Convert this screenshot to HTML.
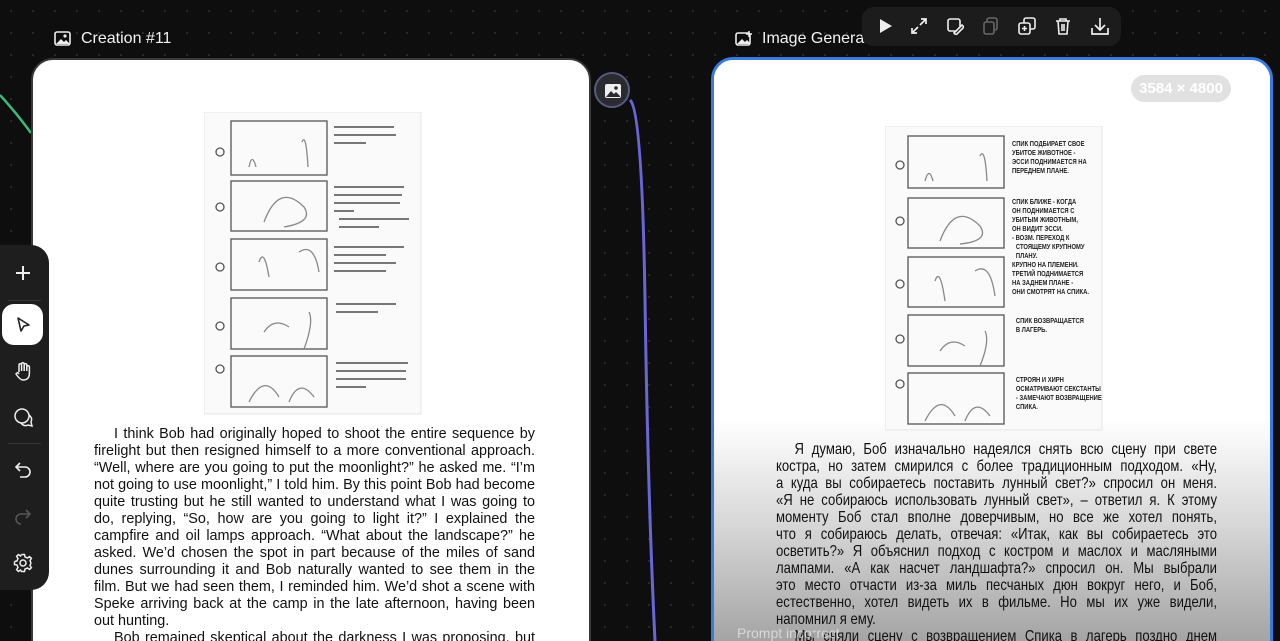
<!DOCTYPE html>
<html><head><meta charset="utf-8"><style>
html,body{margin:0;width:1280px;height:641px;overflow:hidden}
body{font-family:"Liberation Sans",sans-serif;position:relative;
background-image:radial-gradient(circle,#2a2a2a 1px,transparent 1.2px);background-size:22px 22px;background-color:#0e0e0e}
.abs{position:absolute}
.title{color:#f2f2f2;font-size:16px;}
.card{position:absolute;background:#fff;border-radius:22px;overflow:hidden}
.txt{position:absolute;font-family:"Liberation Sans","DejaVu Sans",sans-serif;font-size:14.4px;line-height:17px;color:#111;white-space:nowrap}
.txt div{text-align:justify;text-align-last:justify}
.txt div.l{text-align-last:left}
.ru{transform-origin:0 0;transform:scaleX(0.84);font-size:15.6px}
.sb{position:absolute;left:0;top:245px;width:49px;height:345px;background:#1e1e1e;border-radius:0 18px 18px 0}
.sb svg{position:absolute;left:13px}
.tb{position:absolute;left:862px;top:7px;width:259px;height:39px;background:#1c1c1c;border-radius:12px}
.tb svg{position:absolute;top:10px}
</style></head><body>
<svg class="abs" style="left:0;top:0" width="1280" height="641">
<path d="M0 95 Q18 115 31 133" stroke="#3cb878" stroke-width="2.5" fill="none"/>
<path d="M630 100 Q642 110 645 300 Q648 500 655 641" stroke="#6a66d8" stroke-width="3" fill="none"/>
</svg>
<svg class="abs" style="left:54px;top:31px" width="18" height="16"><rect x="1" y="1" width="15" height="13" rx="2" fill="none" stroke="#eee" stroke-width="1.6"/><path d="M2 13 L7 8 L10 11 L12 9 L15 12 V13Z" fill="#eee"/><circle cx="11" cy="5" r="1.6" fill="#eee"/></svg>
<div class="abs title" style="left:81px;top:30px">Creation #11</div>
<svg class="abs" style="left:735px;top:31px" width="18" height="16"><rect x="1" y="2" width="14" height="12" rx="2" fill="none" stroke="#eee" stroke-width="1.6"/><path d="M2 13 L7 8 L10 11 L12 9 L15 12 V13Z" fill="#eee"/><path d="M14 0V6M11 3H17" stroke="#eee" stroke-width="1.5"/></svg>
<div class="abs title" style="left:762px;top:30px">Image Genera</div>

<div class="card" style="left:31px;top:58px;width:556px;height:600px;border:2px solid #3a3a3a">
<svg class="abs" style="left:171px;top:52px" width="218" height="303">
<rect x="0" y="0" width="217" height="302" fill="#fafafa" stroke="#e4e4e4"/>
<g fill="none" stroke="#555" stroke-width="1.3">
<rect x="27" y="9" width="96" height="54"/><rect x="27" y="69" width="96" height="50"/><rect x="27" y="127" width="96" height="51"/><rect x="27" y="186" width="96" height="51"/><rect x="27" y="244" width="96" height="51"/>
<circle cx="16" cy="40" r="4"/><circle cx="16" cy="95" r="4"/><circle cx="16" cy="155" r="4"/><circle cx="16" cy="214" r="4"/><circle cx="16" cy="257" r="4"/>
<path d="M45 55 Q48 40 52 55 M98 30 Q102 20 104 55 M60 110 Q75 70 100 95 Q110 110 80 115 M55 150 Q60 135 65 165 M95 140 Q110 130 115 160 M60 220 Q70 205 85 215 M105 200 Q110 210 100 237 M45 290 Q60 260 75 285 M85 290 Q95 265 110 285" stroke="#888"/>
</g>
<g fill="#777"><rect x="130" y="14" width="60" height="2"/><rect x="130" y="22" width="62" height="2"/><rect x="130" y="30" width="32" height="2"/>
<rect x="130" y="74" width="70" height="2"/><rect x="130" y="82" width="68" height="2"/><rect x="130" y="90" width="66" height="2"/><rect x="130" y="98" width="20" height="2"/><rect x="135" y="106" width="70" height="2"/><rect x="135" y="114" width="40" height="2"/>
<rect x="130" y="134" width="70" height="2"/><rect x="130" y="142" width="52" height="2"/><rect x="130" y="150" width="62" height="2"/><rect x="130" y="158" width="52" height="2"/>
<rect x="132" y="191" width="60" height="2"/><rect x="132" y="199" width="42" height="2"/>
<rect x="132" y="250" width="72" height="2"/><rect x="132" y="258" width="70" height="2"/><rect x="132" y="266" width="70" height="2"/><rect x="132" y="274" width="30" height="2"/></g>
</svg>
<div class="txt" style="left:61px;top:366px;width:441px">
<div style="padding-left:20px">I think Bob had originally hoped to shoot the entire sequence by</div>
<div>firelight but then resigned himself to a more conventional approach.</div>
<div>“Well, where are you going to put the moonlight?” he asked me. “I’m</div>
<div>not going to use moonlight,” I told him. By this point Bob had become</div>
<div>quite trusting but he still wanted to understand what I was going to</div>
<div>do, replying, “So, how are you going to light it?” I explained the</div>
<div>campfire and oil lamps approach. “What about the landscape?” he</div>
<div>asked. We’d chosen the spot in part because of the miles of sand</div>
<div>dunes surrounding it and Bob naturally wanted to see them in the</div>
<div>film. But we had seen them, I reminded him. We’d shot a scene with</div>
<div>Speke arriving back at the camp in the late afternoon, having been</div>
<div class="l">out hunting.</div>
<div style="padding-left:20px">Bob remained skeptical about the darkness I was proposing, but</div>
</div>
</div>
<div class="abs" style="left:594px;top:72px;width:36px;height:36px;border-radius:50%;background:#2a2a30;border:2px solid #555a80;box-sizing:border-box"></div>
<svg class="abs" style="left:604px;top:83px" width="18" height="16"><rect x="1" y="1" width="16" height="14" rx="2" fill="#eee"/><path d="M2 14 L7 8 L10 11 L12 9 L16 13 V14Z" fill="#2a2a30"/><circle cx="12" cy="5" r="1.8" fill="#2a2a30"/></svg>

<div class="card" style="left:711px;top:57px;width:556px;height:600px;border:3px solid #3a7ae0">
<div class="abs" style="left:0;top:0;right:0;bottom:0;background:linear-gradient(#fff 0,#fff 360px,#d5d5d5 470px,#a0a0a0 590px)"></div>
<div class="abs" style="left:417px;top:15px;width:100px;height:27px;border-radius:14px;background:#e1e1e1;color:#fff;font-size:15px;font-weight:bold;text-align:center;line-height:27px">3584 × 4800</div>
<svg class="abs" style="left:171px;top:66px" width="218" height="305">
<rect x="0" y="0" width="217" height="304" fill="#fafafa" stroke="#e4e4e4"/>
<g fill="none" stroke="#555" stroke-width="1.3">
<rect x="23" y="10" width="96" height="52"/><rect x="23" y="72" width="96" height="50"/><rect x="23" y="131" width="96" height="50"/><rect x="23" y="189" width="96" height="51"/><rect x="23" y="247" width="96" height="51"/>
<circle cx="15" cy="39" r="4"/><circle cx="15" cy="95" r="4"/><circle cx="15" cy="158" r="4"/><circle cx="15" cy="213" r="4"/><circle cx="15" cy="258" r="4"/>
<path d="M40 55 Q44 40 48 55 M95 30 Q100 20 102 55 M55 115 Q70 75 95 100 Q105 115 75 118 M50 155 Q55 140 60 175 M90 145 Q105 135 110 170 M55 225 Q65 210 80 220 M100 205 Q105 215 95 240 M40 295 Q55 265 70 290 M80 295 Q90 270 105 290" stroke="#888"/>
</g>
<g font-family="Liberation Sans,DejaVu Sans,sans-serif" font-size="7.5" font-weight="bold" fill="#222" transform="translate(127 0) scale(0.78 1)">
<text x="0" y="20">СПИК ПОДБИРАЕТ СВОЕ</text><text x="0" y="29">УБИТОЕ ЖИВОТНОЕ -</text><text x="0" y="38">ЭССИ ПОДНИМАЕТСЯ НА</text><text x="0" y="47">ПЕРЕДНЕМ ПЛАНЕ.</text>
<text x="0" y="78">СПИК БЛИЖЕ - КОГДА</text><text x="0" y="87">ОН ПОДНИМАЕТСЯ С</text><text x="0" y="96">УБИТЫМ ЖИВОТНЫМ,</text><text x="0" y="105">ОН ВИДИТ ЭССИ.</text><text x="0" y="114">- ВОЗМ. ПЕРЕХОД К</text><text x="5" y="123">СТОЯЩЕМУ КРУПНОМУ</text><text x="5" y="132">ПЛАНУ.</text>
<text x="0" y="141">КРУПНО НА ПЛЕМЕНИ.</text><text x="0" y="150">ТРЕТИЙ ПОДНИМАЕТСЯ</text><text x="0" y="159">НА ЗАДНЕМ ПЛАНЕ -</text><text x="0" y="168">ОНИ СМОТРЯТ НА СПИКА.</text>
<text x="5" y="197">СПИК ВОЗВРАЩАЕТСЯ</text><text x="5" y="206">В ЛАГЕРЬ.</text>
<text x="5" y="256">СТРОЯН И ХИРН</text><text x="5" y="265">ОСМАТРИВАЮТ СЕКСТАНТЫ</text><text x="5" y="274">- ЗАМЕЧАЮТ ВОЗВРАЩЕНИЕ</text><text x="5" y="283">СПИКА.</text></g>
</svg>
<div class="txt ru" style="left:62px;top:381px;width:525px">
<div style="padding-left:22px">Я думаю, Боб изначально надеялся снять всю сцену при свете</div>
<div>костра, но затем смирился с более традиционным подходом. «Ну,</div>
<div>а куда вы собираетесь поставить лунный свет?» спросил он меня.</div>
<div>«Я не собираюсь использовать лунный свет», – ответил я. К этому</div>
<div>моменту Боб стал вполне доверчивым, но все же хотел понять,</div>
<div>что я собираюсь делать, отвечая: «Итак, как вы собираетесь это</div>
<div>осветить?» Я объяснил подход с костром и маслох и масляными</div>
<div>лампами. «А как насчет ландшафта?» спросил он. Мы выбрали</div>
<div>это место отчасти из-за миль песчаных дюн вокруг него, и Боб,</div>
<div>естественно, хотел видеть их в фильме. Но мы их уже видели,</div>
<div class="l">напомнил я ему.</div>
<div style="padding-left:22px">Мы сняли сцену с возвращением Спика в лагерь поздно днем</div>
</div>
<div class="abs" style="left:23px;top:565px;color:rgba(255,255,255,.55);font-size:14px">Prompt incorrect</div>
</div>

<div class="tb">
<svg style="left:14px" width="18" height="18"><path d="M4 2 L16 9 L4 16Z" fill="#eee"/></svg>
<svg style="left:48px" width="18" height="18" fill="none" stroke="#eee" stroke-width="1.7"><path d="M11 2H16V7M16 2L10 8M7 16H2V11M2 16L8 10"/></svg>
<svg style="left:84px" width="18" height="18" fill="none" stroke="#eee" stroke-width="1.6"><rect x="2" y="2" width="12" height="12" rx="2"/><path d="M8 16L16 8L18 10L10 18Z" fill="#1c1c1c"/></svg>
<svg style="left:120px" width="18" height="18" fill="none" stroke="#666" stroke-width="1.6"><rect x="5" y="1" width="10" height="12" rx="2"/><rect x="2" y="5" width="10" height="12" rx="2" fill="#1c1c1c"/></svg>
<svg style="left:156px" width="18" height="18" fill="none" stroke="#eee" stroke-width="1.6"><rect x="6" y="1" width="11" height="11" rx="2"/><rect x="1" y="6" width="11" height="11" rx="2" fill="#1c1c1c"/><path d="M6.5 9V14M4 11.5H9"/></svg>
<svg style="left:192px" width="18" height="18" fill="none" stroke="#eee" stroke-width="1.6"><path d="M2 4H16M6 4V2H12V4M4 4L5 17H13L14 4M8 7V14M10 7V14"/></svg>
<svg style="left:228px" width="20" height="18" fill="none" stroke="#eee" stroke-width="1.7"><path d="M10 1V12M5 8L10 13L15 8M2 11V17H18V11"/></svg>
</div>

<div class="sb">
<svg style="top:18px" width="20" height="20" stroke="#eee" stroke-width="2"><path d="M10 3V17M3 10H17"/></svg>
<div class="abs" style="left:8px;top:55px;width:33px;height:1px;background:#333"></div>
<div class="abs" style="left:2px;top:59px;width:41px;height:41px;background:#fff;border-radius:12px"></div>
<svg style="top:70px" width="20" height="20" fill="none" stroke="#222" stroke-width="1.6"><path d="M5 3L16 10L11 11L8 16Z" stroke-linejoin="round"/></svg>
<svg style="top:116px" width="20" height="22" fill="none" stroke="#eee" stroke-width="1.5"><path d="M6 11V4a1.3 1.3 0 0 1 2.6 0V10M8.6 3a1.3 1.3 0 0 1 2.6 0V10M11.2 4a1.3 1.3 0 0 1 2.6 0V10M13.8 6a1.3 1.3 0 0 1 2.6 0V13Q16 19 10 19Q7 19 3 13L4 12Q5 11 6 13"/></svg>
<svg style="top:162px" width="22" height="22" fill="none" stroke="#eee" stroke-width="1.5"><circle cx="9" cy="9" r="7"/><path d="M16 8Q20 11 18 15L19 19L15 18Q11 20 8 16"/></svg>
<div class="abs" style="left:8px;top:198px;width:33px;height:1px;background:#333"></div>
<svg style="top:215px" width="20" height="20" fill="none" stroke="#eee" stroke-width="1.6"><path d="M7 3L3 7L7 11M3 7H12a5 5 0 0 1 0 10H7"/></svg>
<svg style="top:262px" width="20" height="20" fill="none" stroke="#555" stroke-width="1.6"><path d="M13 3L17 7L13 11M17 7H8a5 5 0 0 0 0 10"/></svg>
<svg style="top:308px" width="20" height="20" fill="none" stroke="#eee" stroke-width="1.5"><circle cx="10" cy="10" r="3"/><path d="M8.5 1.5H11.5L12 4L14.5 5L16.6 3.6L18.4 5.4L17 7.5L18 10L18.5 10V10M1.5 8.5V11.5L4 12L5 14.5L3.6 16.6L5.4 18.4L7.5 17L8.5 18.5H11.5L12 16L14.5 15L16.6 16.4L18.4 14.6L17 12.5L18 10M1.5 8.5L4 8L5 5.5L3.6 3.4L5.4 1.6L7.5 3L8.5 1.5"/></svg>
</div>
</body></html>
